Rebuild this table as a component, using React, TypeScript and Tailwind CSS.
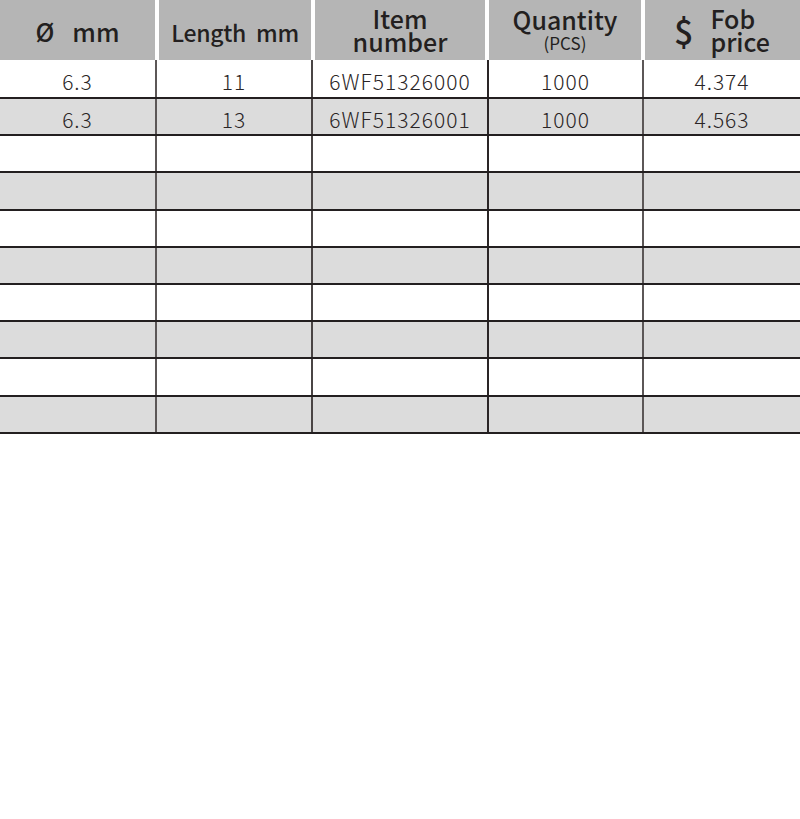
import React from "react";

const font = { fontFamily: '"Noto Sans CJK SC", "Noto Sans", sans-serif' };

const rows = [
  ["6.3", "11", "6WF51326000", "1000", "4.374"],
  ["6.3", "13", "6WF51326001", "1000", "4.563"],
  ["", "", "", "", ""],
  ["", "", "", "", ""],
  ["", "", "", "", ""],
  ["", "", "", "", ""],
  ["", "", "", "", ""],
  ["", "", "", "", ""],
  ["", "", "", "", ""],
  ["", "", "", "", ""],
];

const widths = ["w-[155px]", "w-[156px]", "w-[176px]", "w-[155px]", "w-[158px]"];
const vborders = ["", "border-l-2 border-[#5c5757]", "border-l-2 border-[#4a4545]", "border-l-2 border-[#2a2526]", "border-l-2 border-[#5c5757]"];

export default function App() {
  return (
    <div className="w-[800px] h-[819px] bg-white text-[#231f20]" style={font}>
      <div className="flex h-[60px] gap-[4px]">
        <div className="w-[155px] bg-[#b5b5b5] flex items-center justify-center pt-[4px] text-[25px] font-medium">
          <span>Ø</span>
          <span className="ml-[18px]">mm</span>
        </div>
        <div className="w-[152px] bg-[#b5b5b5] flex items-center justify-center pt-[4px] text-[23px] font-medium tracking-[-0.3px]">
          <span>Length</span>
          <span className="ml-[10px]">mm</span>
        </div>
        <div className="w-[170px] bg-[#b5b5b5] flex flex-col items-center justify-center text-[25px] font-medium leading-[23px]">
          <span>Item</span>
          <span>number</span>
        </div>
        <div className="w-[152px] bg-[#b5b5b5] flex flex-col items-center justify-center font-medium">
          <span className="text-[25px] leading-[26px] mt-[-2px]">Quantity</span>
          <span className="text-[17px] leading-[20px] font-normal mt-[1px]">(PCS)</span>
        </div>
        <div className="w-[155px] bg-[#b5b5b5] flex items-center pl-[29px] font-medium">
          <span className="text-[34px] leading-none mt-[2px]">$</span>
          <span className="ml-[17px] flex flex-col text-[25px] leading-[23px]">
            <span>Fob</span>
            <span>price</span>
          </span>
        </div>
      </div>
      {rows.map((r, i) => (
        <div
          key={i}
          className={`flex ${i === 0 ? "h-[39px]" : "h-[37.2px]"} border-b-2 border-[#231f20] ${i % 2 === 1 ? "bg-[#dcdcdc]" : "bg-white"}`}
        >
          {r.map((c, j) => (
            <div
              key={j}
              className={`${widths[j]} ${vborders[j]} flex items-center justify-center pt-[6px] text-[21px] tracking-[1px] font-light text-[#2a2526]`}
            >
              {c}
            </div>
          ))}
        </div>
      ))}
    </div>
  );
}
